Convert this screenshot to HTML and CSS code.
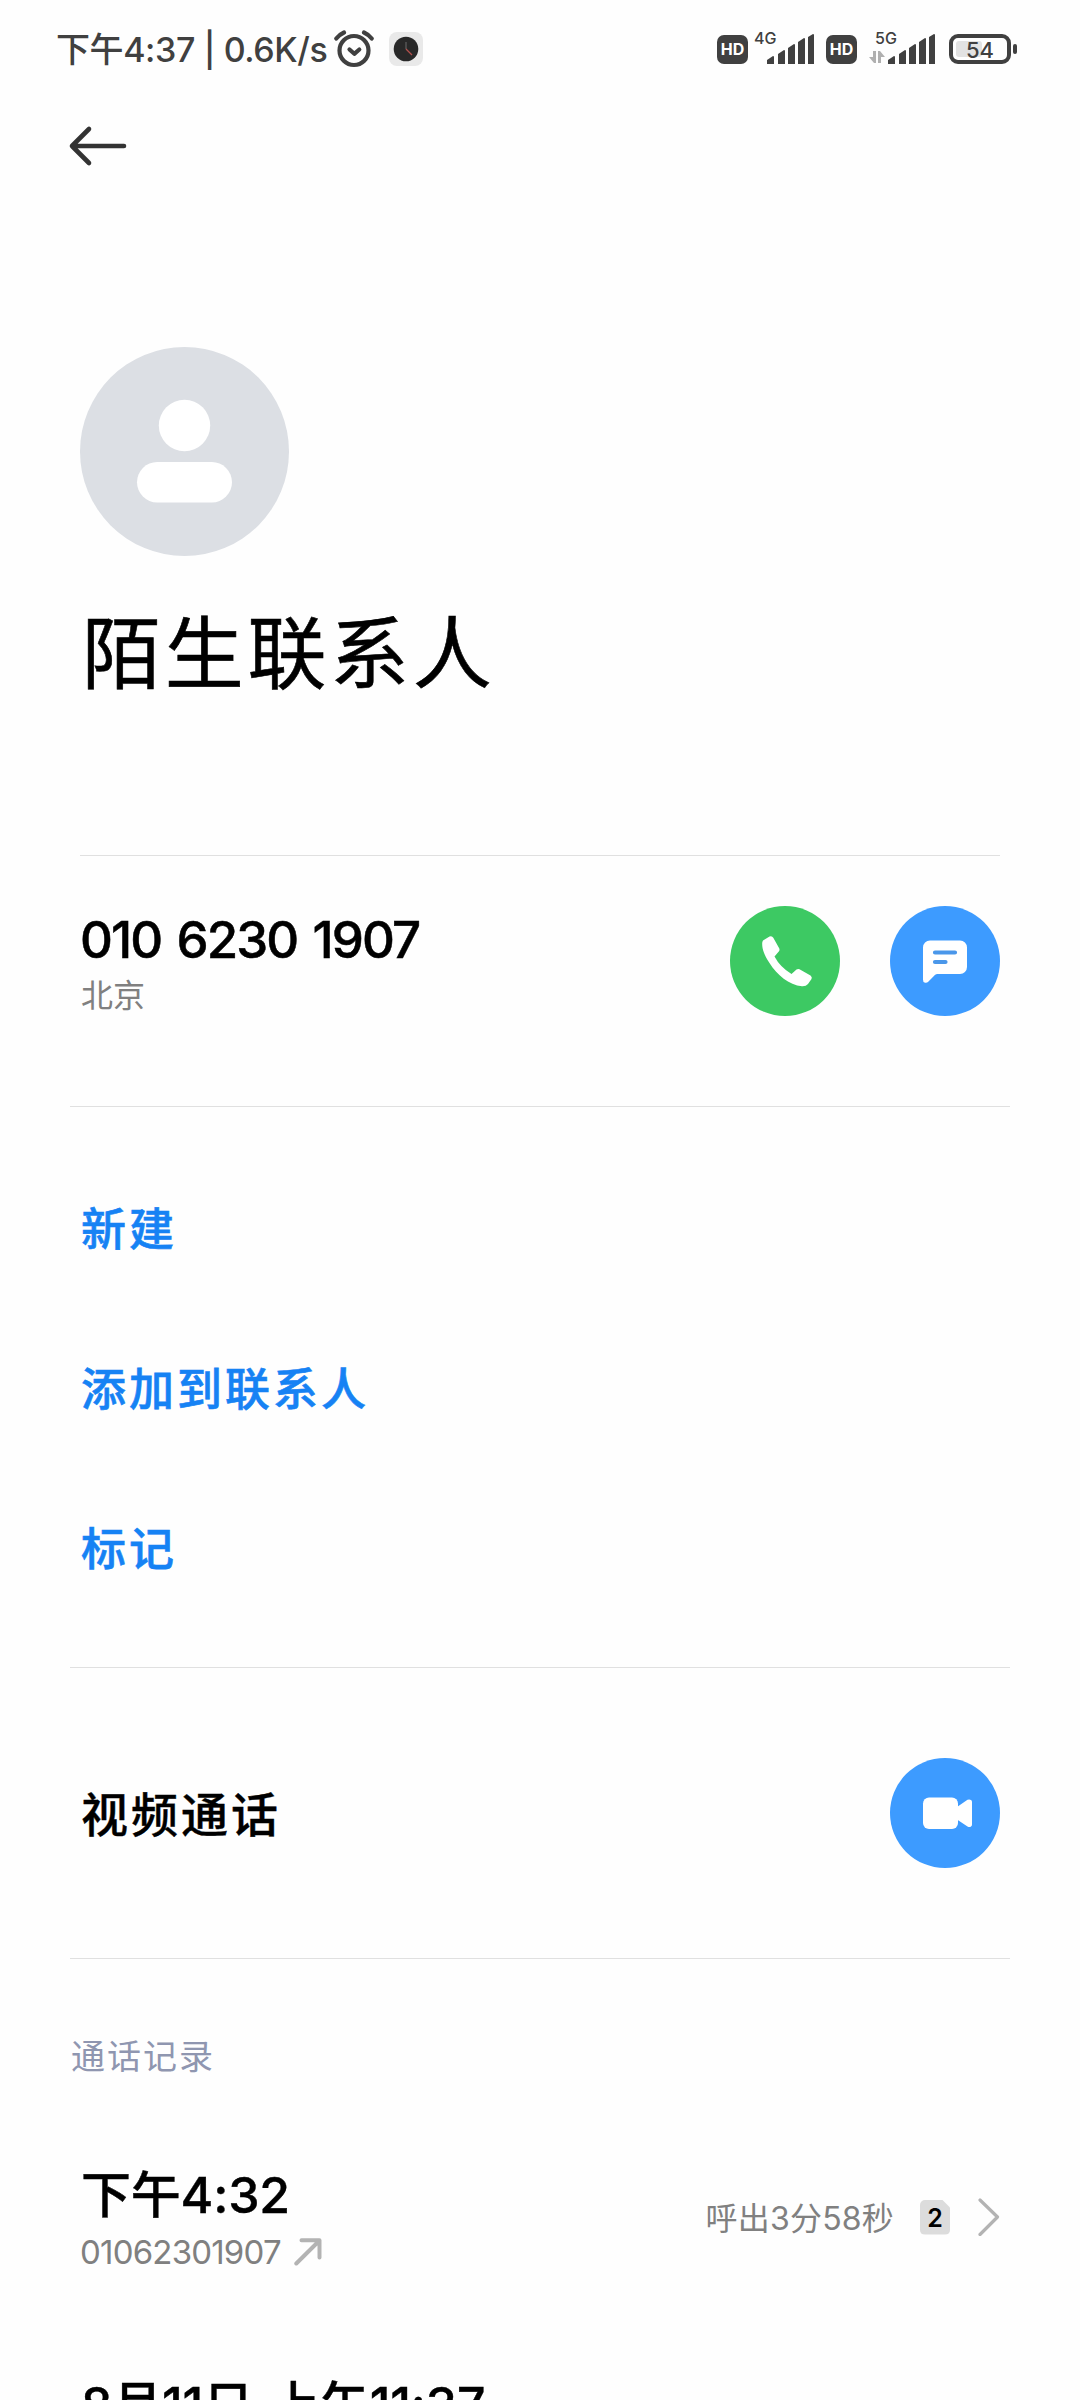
FILE: index.html
```html
<!DOCTYPE html>
<html lang="zh-CN">
<head>
    <meta charset="UTF-8">
    <meta name="viewport" content="width=device-width, initial-scale=1.0">
    <title>陌生联系人</title>
    <link rel="stylesheet" href="styles.css">
</head>
<body>
    <div class="status-bar">
        <div class="status-left">
            <span class="status-text">下午4:37 | 0.6K/s</span>
            <svg class="alarm-icon" width="40" height="38" viewBox="0 0 40 38" fill="none" stroke="#404040" stroke-width="4.2" stroke-linecap="round" stroke-linejoin="round">
                <circle cx="20" cy="20.5" r="14.5"/>
                <path d="M15.5 19.5l4.8 4.3 5-4.3"/>
                <path d="M2.3 8.5Q5.5 4.5 10 2.5M30 2.5q4.5 2 7.7 6"/>
            </svg>
            <svg class="clock-icon" width="34" height="34" viewBox="0 0 34 34">
                <rect width="34" height="34" rx="8" fill="#e9e9e9"/>
                <circle cx="17" cy="17" r="12.3" fill="#282828"/>
                <path d="M17 10v7" stroke="#555" stroke-width="1.5"/>
                <path d="M17 17l6 6" stroke="#b5504c" stroke-width="1.2"/>
            </svg>
        </div>
        <div class="status-right">
            <span class="hd-badge">HD</span>
            <div class="signal signal-4g">
                <span class="net-label">4G</span>
                <svg width="48" height="32" viewBox="0 0 48 32" fill="#404040">
                    <path d="M0 27l6-4q1 0 1 1v7H0zM11 21l6-4q1 0 1 1v13h-7zM21 15l6-4q1 0 1 1v19h-7zM31 9l6-4q1 0 1 1v25h-7zM41 4l5-3q1 0 1 1v29h-6z"/>
                </svg>
            </div>
            <span class="hd-badge">HD</span>
            <div class="signal signal-5g">
                <span class="net-label">5G</span>
                <svg class="data-icon" width="16" height="13" viewBox="0 0 16 13" fill="#b0b0b0">
                    <path d="M4 0h3v12H5L0 6h4zM9 12V0h2l5 6h-4v6z"/>
                </svg>
                <svg width="48" height="32" viewBox="0 0 48 32" fill="#404040">
                    <path d="M0 27l6-4q1 0 1 1v7H0zM11 21l6-4q1 0 1 1v13h-7zM21 15l6-4q1 0 1 1v19h-7zM31 9l6-4q1 0 1 1v25h-7zM41 4l5-3q1 0 1 1v29h-6z"/>
                </svg>
            </div>
            <div class="battery">
                <span class="battery-level" style="width: 54%"></span>
                <span class="battery-text">54</span>
            </div>
        </div>
    </div>

    <div class="toolbar">
        <svg class="back-icon" width="60" height="42" viewBox="0 0 60 42" fill="none" stroke="#333" stroke-width="4.6" stroke-linecap="round" stroke-linejoin="round">
            <path d="M21 4L4 21l17 17M4 21h52"/>
        </svg>
    </div>

    <div class="profile">
        <svg class="avatar" width="209" height="209" viewBox="0 0 209 209">
            <circle cx="104.5" cy="104.5" r="104.5" fill="#dcdfe4"/>
            <circle cx="104.5" cy="78.5" r="25.7" fill="#fff"/>
            <rect x="57" y="115" width="95" height="40.5" rx="20.2" fill="#fff"/>
        </svg>
        <h1>陌生联系人</h1>
    </div>

    <div class="number-row">
        <div>
            <div class="number">010 6230 1907</div>
            <div class="location">北京</div>
        </div>
        <div class="actions">
            <button class="round-btn call">
                <svg width="110" height="110" viewBox="0 0 110 110" fill="#fff">
                    <path d="M33 34.5L39.5 30.5Q42 29.5 43.3 31.7L49.3 42.5Q50 44 49 45.2L44.5 50.5Q50 61 61.5 68L66.5 63.5Q68 62.5 69.5 63.2L80.5 69.5Q82.5 71 81.5 73L78 78Q76 80.5 72 80.3C59 79 47 69 39.5 57C34 48.5 32 43 32.2 37Q32.3 35.5 33 34.5z"/>
                </svg>
            </button>
            <button class="round-btn">
                <svg width="110" height="110" viewBox="0 0 110 110">
                    <path d="M40 34.5h30a7 7 0 0 1 7 7v19.500a7 7 0 0 1-7 7H47.500q-1.500 0-2.600 1L38 76q-1.500 1.300-3.500.500-1.500-.5-1.500-3V41.500a7 7 0 0 1 7-7z" fill="#fff"/>
                    <path d="M45 46.500h20M45 56h10.500" stroke="#4a97ea" stroke-width="4.2" stroke-linecap="round"/>
                </svg>
            </button>
        </div>
    </div>

    <div class="menu">
        <a class="menu-item">新建</a>
        <a class="menu-item">添加到联系人</a>
        <a class="menu-item">标记</a>
    </div>

    <div class="video-row">
        <span class="video-title">视频通话</span>
        <button class="round-btn">
            <svg width="110" height="110" viewBox="0 0 110 110" fill="#fff">
                <rect x="33" y="39.5" width="35" height="31.5" rx="6"/>
                <path d="M67 49l10.500-7.200Q79.500 41 81 42q1 .7 1 2v22.500q0 1.500-1 2-1.500 1-3.500 0L67 61.500z"/>
            </svg>
        </button>
    </div>

    <div class="log">
        <h2>通话记录</h2>
        <div class="log-row">
            <div>
                <div class="log-time">下午4:32</div>
                <div class="log-number">
                    <span class="log-digits">01062301907</span>
                    <svg width="28" height="28" viewBox="0 0 28 28" fill="none" stroke="#b3b3b3" stroke-width="4" stroke-linecap="round" stroke-linejoin="round">
                        <path d="M2.3 25.5L25 3M7.5 2.300H25.500V19.500"/>
                    </svg>
                </div>
            </div>
            <div class="log-detail">
                <span class="duration">呼出3分58秒</span>
                <span class="sim">2</span>
                <svg width="22" height="38" viewBox="0 0 22 38" fill="none" stroke="#b3b3b3" stroke-width="3.2" stroke-linecap="round" stroke-linejoin="round">
                    <path d="M2 2l17.500 17L2 36.500"/>
                </svg>
            </div>
        </div>
        <div class="log-row">
            <div>
                <div class="log-time">8月11日 上午11:37</div>
            </div>
        </div>
    </div>
</body>
</html>
```
FILE: styles.css
```css
* {
    margin: 0;
    padding: 0;
    box-sizing: border-box;
}

body {
    width: 1080px;
    height: 2400px;
    overflow: hidden;
    background: #fefefe;
    color: #000;
    font-family: Inter, 'Noto Sans CJK SC', sans-serif;
}

svg {
    display: block;
    flex-shrink: 0;
}

/* status bar */
.status-bar {
    display: flex;
    justify-content: space-between;
    height: 98px;
    padding: 0 63px 0 56px;
    align-items: center;
    color: #404040;
}

.status-left,
.status-right {
    display: flex;
    align-items: center;
}

.status-text {
    width: 278px;
    padding-top: 2px;
    font-size: 34px;
    font-weight: 500;
    line-height: 40px;
    letter-spacing: -0.4px;
    white-space: nowrap;
}

.clock-icon {
    margin-left: 15px;
}

.hd-badge {
    width: 31px;
    height: 29px;
    border-radius: 7px;
    background: #404040;
    color: #fff;
    font-size: 16px;
    font-weight: 700;
    line-height: 29px;
    text-align: center;
}

.signal {
    position: relative;
    height: 32px;
    display: flex;
    justify-content: flex-end;
}

.signal-4g {
    width: 67px;
    margin-right: 11px;
}

.signal-5g {
    width: 79px;
    margin-right: 13px;
}

.net-label {
    position: absolute;
    left: 6px;
    top: -3px;
    font-size: 16px;
    font-weight: 500;
    line-height: 16px;
}

.signal-5g .net-label {
    left: 18px;
}

.data-icon {
    position: absolute;
    left: 12px;
    top: 18px;
}

.battery {
    position: relative;
    width: 62px;
    height: 30px;
    margin-right: 6px;
    padding: 3px;
    border: 4px solid #404040;
    border-radius: 9px;
}

.battery::after {
    content: '';
    position: absolute;
    right: -10px;
    top: 6px;
    width: 4px;
    height: 10px;
    border-radius: 2px;
    background: #404040;
}

.battery-level {
    display: block;
    height: 16px;
    border-radius: 3px;
    background: #e2e2e2;
}

.battery-text {
    position: absolute;
    inset: 0;
    font-size: 22px;
    font-weight: 500;
    line-height: 24px;
    text-align: center;
}

/* header */
.toolbar {
    height: 249px;
    padding: 27px 0 0 68px;
}

.profile {
    height: 508px;
    margin: 0 80px;
}

.profile h1 {
    margin-top: 40px;
    padding-left: 2px;
    font-size: 79px;
    font-weight: 400;
    line-height: 116px;
    letter-spacing: 3.7px;
    -webkit-text-stroke: 0.6px #000;
}

/* number */
.number-row {
    display: flex;
    justify-content: space-between;
    height: 251px;
    margin: 0 80px;
    padding-top: 50px;
    border-top: 1px solid #e0e0e0;
}

.number {
    font-size: 51px;
    font-weight: 500;
    line-height: 67px;
    letter-spacing: -1.9px;
    word-spacing: 3.5px;
    -webkit-text-stroke: 0.5px #000;
}

.location {
    padding: 1px 0 0 1px;
    font-size: 32px;
    line-height: 44px;
    color: #808080;
}

.actions {
    display: flex;
    gap: 50px;
}

.round-btn {
    width: 110px;
    height: 110px;
    border: none;
    border-radius: 50%;
    background: #3d9bff;
}

.round-btn.call {
    background: #3dc963;
}

/* actions list */
.menu {
    height: 561px;
    margin: 0 70px;
    padding: 43px 10px 0 11px;
    border-top: 1px solid #e0e0e0;
}

.menu-item {
    display: block;
    height: 160px;
    font-size: 45px;
    font-weight: 500;
    line-height: 160px;
    letter-spacing: 3px;
    color: #1682f4;
    -webkit-text-stroke: 0.6px #1682f4;
}

.video-row {
    display: flex;
    justify-content: space-between;
    align-items: center;
    height: 291px;
    margin: 0 70px;
    padding: 0 10px;
    border-top: 1px solid #e0e0e0;
}

.video-title {
    padding: 0 0 3px 1px;
    font-size: 47px;
    font-weight: 500;
    letter-spacing: 3px;
    -webkit-text-stroke: 0.4px #000;
}

/* call log */
.log {
    margin: 0 70px;
    border-top: 1px solid #e0e0e0;
}

.log h2 {
    height: 202px;
    padding-left: 1px;
    font-size: 34px;
    font-weight: 400;
    line-height: 196px;
    letter-spacing: 2px;
    color: #8f96b0;
}

.log-row {
    display: flex;
    justify-content: space-between;
    height: 210px;
    padding: 0 10px;
}

.log-row:last-child {
    height: 79px;
}

.log-time {
    padding-left: 1px;
    font-size: 50px;
    font-weight: 500;
    line-height: 69px;
    letter-spacing: -0.2px;
    word-spacing: 4px;
    white-space: nowrap;
    -webkit-text-stroke: 0.4px #000;
}

.log-number {
    display: flex;
    align-items: center;
    gap: 13px;
    font-size: 33px;
    line-height: 44px;
    color: #808080;
}

.log-digits {
    letter-spacing: -0.8px;
}

.log-detail {
    display: flex;
    align-items: center;
    height: 112px;
}

.duration {
    padding-bottom: 2px;
    font-size: 32px;
    letter-spacing: 0.2px;
    color: #808080;
}

.sim {
    width: 30px;
    height: 35px;
    margin: 0 28px 0 26px;
    border-radius: 5px;
    background: #dcdcdc;
    clip-path: polygon(0 0, 22px 0, 30px 8px, 30px 100%, 0 100%);
    font-size: 25px;
    font-weight: 600;
    line-height: 36px;
    text-align: center;
}
```
